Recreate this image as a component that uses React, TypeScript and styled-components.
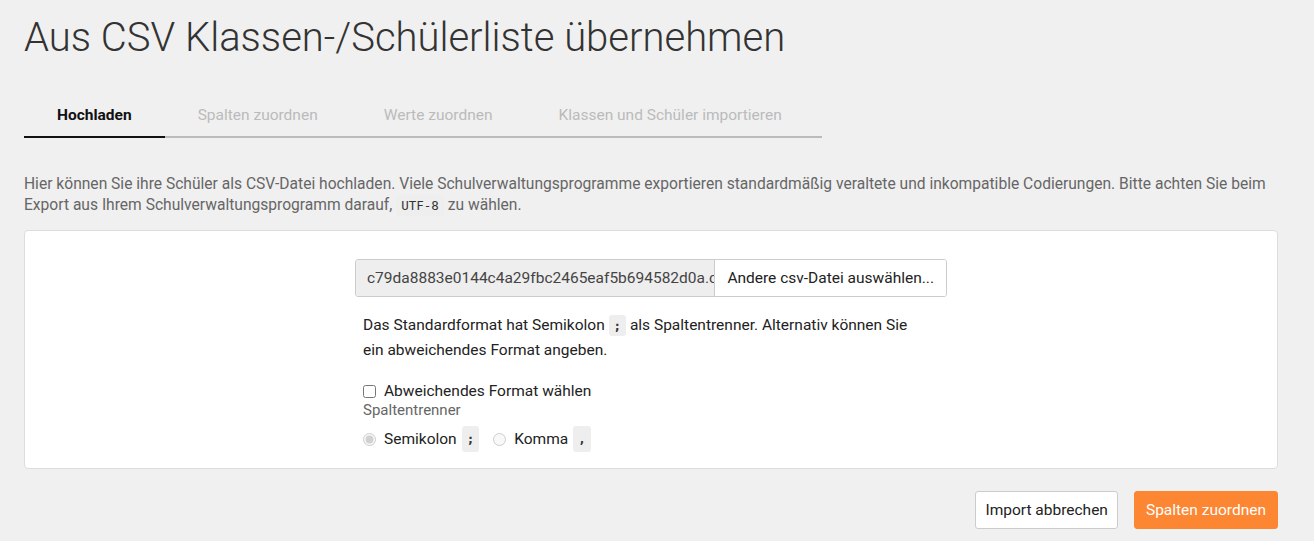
import styled, { createGlobalStyle } from "styled-components";

const GlobalStyle = createGlobalStyle`
  body {
    margin: 0;
    background: #f0f0f0;
    font-family: Roboto, "Liberation Sans", sans-serif;
    color: #333;
  }
`;

const tabs = ["Hochladen", "Spalten zuordnen", "Werte zuordnen", "Klassen und Schüler importieren"];

const App = () => {
  return (
    <>
      <GlobalStyle />
      <SPage>
        <STitle>Aus CSV Klassen-/Schülerliste übernehmen</STitle>
        <STabs>
          {tabs.map((t, i) => (
            <STab key={t} $active={i === 0}>
              {t}
            </STab>
          ))}
        </STabs>
        <SIntro>
          Hier können Sie ihre Schüler als CSV-Datei hochladen. Viele Schulverwaltungsprogramme exportieren
          standardmäßig veraltete und inkompatible Codierungen. Bitte achten Sie beim Export aus Ihrem
          Schulverwaltungsprogramm darauf, <SCode>UTF-8</SCode> zu wählen.
        </SIntro>
        <SCard>
          <SColumn>
            <SFileGroup>
              <SFileName>c79da8883e0144c4a29fbc2465eaf5b694582d0a.csv</SFileName>
              <SFileButton>Andere csv-Datei auswählen...</SFileButton>
            </SFileGroup>
            <SInner>
              <SHint>
                Das Standardformat hat Semikolon <SCode $bold>;</SCode> als Spaltentrenner. Alternativ können Sie
                ein abweichendes Format angeben.
              </SHint>
              <SCheckRow>
                <SCheckbox type="checkbox" />
                Abweichendes Format wählen
              </SCheckRow>
              <SSubLabel>Spaltentrenner</SSubLabel>
              <SRadioRow>
                <SRadioLabel>
                  <SRadio type="radio" name="sep" defaultChecked disabled />
                  Semikolon <SCode $bold>;</SCode>
                </SRadioLabel>
                <SRadioLabel>
                  <SRadio type="radio" name="sep" disabled />
                  Komma <SCode $bold>,</SCode>
                </SRadioLabel>
              </SRadioRow>
            </SInner>
          </SColumn>
        </SCard>
        <SActions>
          <SButton>Import abbrechen</SButton>
          <SButton $primary>Spalten zuordnen</SButton>
        </SActions>
      </SPage>
    </>
  );
};

const SPage = styled.div`
  padding: 16px 36px 0 24px;
`;

const STitle = styled.h1`
  font-size: 40px;
  font-weight: 300;
  margin: 0;
  line-height: 44px;
  color: #333;
`;

const STabs = styled.div`
  display: flex;
  width: 798px;
  margin-top: 38px;
  border-bottom: 2px solid #bbb;
`;

const STab = styled.div<{ $active?: boolean }>`
  padding: 8px 33px 12px;
  font-size: 15.5px;
  line-height: 18px;
  font-weight: ${(p) => (p.$active ? 700 : 400)};
  color: ${(p) => (p.$active ? "#111" : "#bbb")};
  margin-bottom: -2px;
  border-bottom: 2px solid ${(p) => (p.$active ? "#111" : "transparent")};
  white-space: nowrap;
`;

const SIntro = styled.p`
  margin: 36px 0 0;
  font-size: 15.6px;
  line-height: 21px;
  color: #666;
`;

const SCode = styled.code<{ $bold?: boolean }>`
  font-family: "DejaVu Sans Mono", "Liberation Mono", monospace;
  font-size: 12.5px;
  font-weight: ${(p) => (p.$bold ? 700 : 400)};
  background: #eeeeee;
  color: #333;
  padding: 3px 5px;
  border-radius: 3px;
`;

const SCard = styled.div`
  margin-top: 14px;
  background: #fff;
  border: 1px solid #ddd;
  border-radius: 4px;
  padding: 28px 0 16px;
  display: flex;
  justify-content: center;
`;

const SColumn = styled.div`
  width: 592px;
`;

const SFileGroup = styled.div`
  display: flex;
  height: 36px;
  border: 1px solid #ccc;
  border-radius: 3px;
  overflow: hidden;
  font-size: 15.5px;
`;

const SFileName = styled.div`
  flex: 1;
  min-width: 0;
  background: #eee;
  color: #444;
  padding: 0 11px;
  display: flex;
  align-items: center;
  white-space: nowrap;
  overflow: hidden;
`;

const SFileButton = styled.div`
  border-left: 1px solid #ccc;
  background: #fff;
  color: #222;
  padding: 0 12px;
  display: flex;
  align-items: center;
  white-space: nowrap;
`;

const SInner = styled.div`
  padding: 0 8px;
`;

const SHint = styled.p`
  margin: 16px 0 0;
  font-size: 15.5px;
  line-height: 24px;
  color: #222;
  width: 560px;
`;

const SCheckRow = styled.label`
  display: flex;
  align-items: center;
  gap: 8px;
  margin-top: 19px;
  font-size: 15.5px;
  line-height: 20px;
  color: #222;
`;

const SCheckbox = styled.input`
  margin: 0;
  width: 13px;
  height: 13px;
`;

const SSubLabel = styled.div`
  font-size: 15px;
  line-height: 20px;
  color: #666;
  margin-top: -1px;
`;

const SRadioRow = styled.div`
  display: flex;
  gap: 14px;
  margin-top: 6px;
`;

const SRadioLabel = styled.label`
  display: flex;
  align-items: center;
  gap: 5px;
  font-size: 15.5px;
  line-height: 20px;
  color: #222;
`;

const SRadio = styled.input`
  margin: 0 3px 0 0;
  width: 13px;
  height: 13px;
`;

const SActions = styled.div`
  display: flex;
  justify-content: flex-end;
  gap: 16px;
  margin-top: 22px;
`;

const SButton = styled.button<{ $primary?: boolean }>`
  height: 38px;
  padding: 0 ${(p) => (p.$primary ? 11 : 9)}px;
  font-family: Roboto, "Liberation Sans", sans-serif;
  font-size: 15.5px;
  border-radius: 3px;
  border: 1px solid ${(p) => (p.$primary ? "#fd8632" : "#ccc")};
  background: ${(p) => (p.$primary ? "#fd8632" : "#fff")};
  color: ${(p) => (p.$primary ? "#fff" : "#222")};
`;

export default App;
